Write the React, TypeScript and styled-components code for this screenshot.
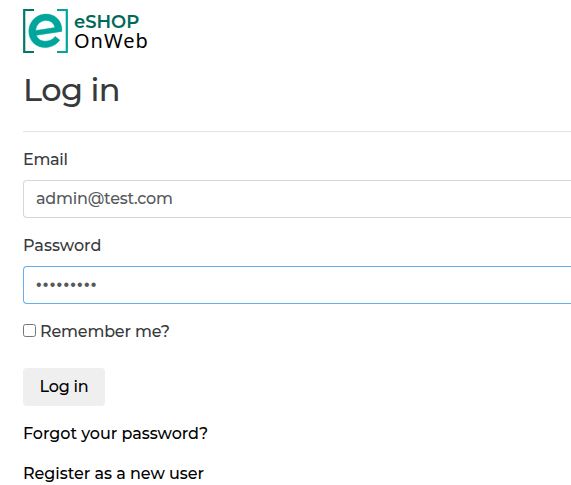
import React from "react";
import styled, { createGlobalStyle } from "styled-components";

const GlobalStyle = createGlobalStyle`
  *, *::before, *::after { box-sizing: border-box; }
  html, body { margin: 0; background: #fff; }
  body {
    font-family: Montserrat, Inter, "Liberation Sans", sans-serif;
    font-size: 16px;
    font-weight: 500;
    line-height: 24px;
    color: #373a3c;
  }
`;

const Page = styled.main`
  width: 100%;
  height: 485px;
  padding: 9px 0 0 23px;
  display: flex;
  flex-direction: column;
  overflow: hidden;
`;
const Brand = styled.a`
  display: flex;
  gap: 6px;
  height: 44px;
  color: #00695c;
`;
const Mark = styled.svg`
  width: 46px;
  height: 44px;
  flex: none;
`;
const BrandText = styled.div`
  display: flex;
  flex-direction: column;
  padding-top: 4px;
`;
const BrandTop = styled.span`
  font-size: 18px;
  font-weight: 600;
  line-height: 18px;
  margin-left: -1px;
`;
const BrandBottom = styled.span`
  font-family: "Noto Sans", sans-serif;
  font-size: 20px;
  font-weight: 400;
  line-height: 20px;
  letter-spacing: 1px;
  margin-left: -1px;
  color: #000;
`;
const Title = styled.h1`
  margin: 18px 0 0;
  height: 38px;
  font-size: 32px;
  font-weight: 500;
  line-height: 38px;
  letter-spacing: -0.6px;
`;
const Rule = styled.hr`
  width: 100%;
  margin: 22px 0 16px;
  border: 0;
  border-top: 1px solid #e3e3e4;
`;
const Form = styled.form`
  display: flex;
  flex-direction: column;
  align-items: flex-start;
`;
const Text = styled.span<{ $track?: number }>`
  letter-spacing: ${(p) => p.$track ?? 0}px;
  white-space: nowrap;
`;
const Field = styled.label`
  display: flex;
  flex-direction: column;
  gap: 8px;
  width: 100%;
  margin-bottom: 16px;
`;
const Input = styled.input<{ $active?: boolean }>`
  width: 100%;
  height: 38px;
  padding: 5px 12px 7px;
  border: 1px solid ${(p) => (p.$active ? "#66afe9" : "#d5d6d7")};
  border-right: 0;
  border-radius: 4px 0 0 4px;
  outline: 0;
  background: #fff;
  color: #55595c;
  font: inherit;
  letter-spacing: -0.22px;
`;
const MaskedInput = styled(Input)`
  font-family: "Liberation Sans", sans-serif;
  letter-spacing: 1.25px;
  padding: 6px 12px;
`;
const Remember = styled.label`
  display: flex;
  align-items: center;
  gap: 4px;
  height: 24px;
  margin-bottom: 24px;
`;
const Checkbox = styled.input`
  width: 13px;
  height: 13px;
  margin: 0 0 3px;
`;
const Button = styled.button`
  width: 82px;
  height: 38px;
  padding: 0;
  border: 0;
  border-radius: 4px;
  background: #efefef;
  color: #000;
  font: inherit;
  margin-bottom: 16px;
`;
const Link = styled.a`
  height: 24px;
  margin-bottom: 16px;
  color: #000;
`;

export default function App() {
  return (
    <>
      <GlobalStyle />
      <Page>
        <Brand>
          <Mark viewBox="0 0 46 44" fill="none">
            <path d="M11 1H1.2v42H11" stroke="#00796b" strokeWidth="2.2" />
            <path d="M34 1h9.8v42H34" stroke="#00a69c" strokeWidth="2.2" />
            <path
              fill="#00a69c"
              stroke="#00a69c"
              strokeWidth="0.5"
              fillRule="evenodd"
              d="M20.5 5.3C29.5 4 37.5 9.5 38.7 18.5Q38.9 20.5 38.8 22.4L13.4 26.2C15 30.6 19 32.8 24.3 32C27.8 31.5 30.2 30 32.1 27.4L36.8 31.1C34 35 30.2 37.5 25 38.3C15 39.7 7.3 33.8 6 24.7C4.7 15.3 11 6.7 20.5 5.3ZM12.8 21.5 31.9 18.6C30.8 13.8 27.2 10.8 21.6 11.6C16.4 12.4 13 16.5 12.8 21.5Z"
            />
          </Mark>
          <BrandText>
            <BrandTop>eSHOP</BrandTop>
            <BrandBottom>OnWeb</BrandBottom>
          </BrandText>
        </Brand>
        <Title>Log in</Title>
        <Rule />
        <Form onSubmit={(e) => e.preventDefault()}>
          <Field>
            <Text $track={-0.3}>Email</Text>
            <Input type="text" defaultValue="admin@test.com" />
          </Field>
          <Field>
            <Text>Password</Text>
            <MaskedInput type="text" readOnly defaultValue="•••••••••" $active />
          </Field>
          <Remember>
            <Checkbox type="checkbox" />
            <Text $track={-0.18}>Remember me?</Text>
          </Remember>
          <Button type="submit">
            <Text $track={-0.25}>Log in</Text>
          </Button>
          <Link>
            <Text $track={-0.05}>Forgot your password?</Text>
          </Link>
          <Link>
            <Text $track={-0.05}>Register as a new user</Text>
          </Link>
        </Form>
      </Page>
    </>
  );
}
